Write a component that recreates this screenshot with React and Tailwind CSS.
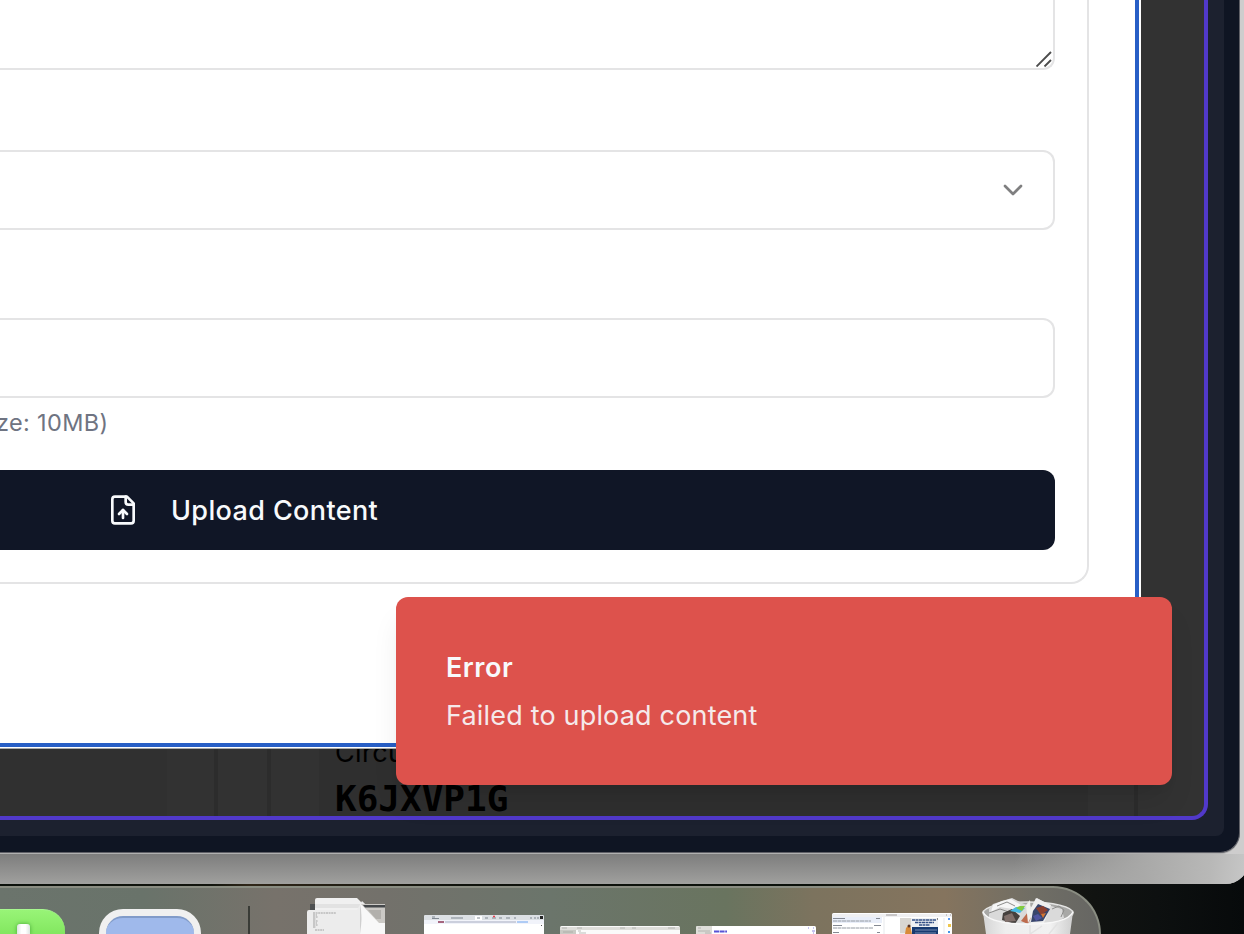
import React from "react";

function ChevronDown() {
  return (
    <svg className="mr-[24px] size-8" viewBox="0 0 24 24" fill="none" stroke="#7f7f80" strokeWidth="2" strokeLinecap="round" strokeLinejoin="round">
      <path d="m6 9 6 6 6-6" />
    </svg>
  );
}

function FileUp() {
  return (
    <svg className="size-8 shrink-0" viewBox="0 0 24 24" fill="none" stroke="#f8fafc" strokeWidth="2" strokeLinecap="round" strokeLinejoin="round">
      <path d="M15 2H6a2 2 0 0 0-2 2v16a2 2 0 0 0 2 2h12a2 2 0 0 0 2-2V7Z" />
      <path d="M14 2v4a2 2 0 0 0 2 2h4" />
      <path d="M12 12v6" />
      <path d="m15 15-3-3-3 3" />
    </svg>
  );
}

function ResizeGrip() {
  return (
    <svg className="size-4" viewBox="0 0 16 16" fill="none" stroke="#4c4c4c" strokeWidth="1.9">
      <path d="M0.500 15.500 15 1M8.500 15.500l6.500-6.500" />
    </svg>
  );
}

function UploadForm() {
  return (
    <div className="flex h-[584px] w-[1089px] flex-col rounded-br-[18px] border-r-2 border-b-2 border-[#e4e4e5]">
      <div className="flex h-[70px] w-[1055px] items-end justify-end rounded-br-[12px] border-r-2 border-b-2 border-[#e4e4e5] pr-[1px] pb-[1px]">
        <ResizeGrip />
      </div>
      <div className="mt-20 flex h-20 w-[1055px] items-center justify-end rounded-r-[12px] border-2 border-l-0 border-[#e4e4e5]">
        <ChevronDown />
      </div>
      <div className="mt-[88px] h-20 w-[1055px] rounded-r-[12px] border-2 border-l-0 border-[#e4e4e5]" />
      <p className="mt-[9px] -ml-[4px] text-[23.500px] leading-8 tracking-[0.35px] whitespace-nowrap text-[#6f7482]">ze: 10MB)</p>
      <div className="mt-[31px] flex h-20 w-[1055px] items-center gap-[33px] rounded-r-[12px] bg-[#101626] pl-[107px] text-[27px] font-medium tracking-[0.38px] text-[#f8fafc]">
        <FileUp />
        <span className="-ml-[1px] pt-[2px]">Upload Content</span>
      </div>
    </div>
  );
}

function PageBehind() {
  return (
    <div className="flex h-[67px] overflow-hidden text-black">
      <div className="h-full w-[167px] bg-[#303030]" />
      <div className="h-full w-[51px] border-r-4 border-[#2c2c2c]" />
      <div className="h-full w-[53px] border-r-4 border-[#2c2c2c]" />
      <div className="h-full w-[48px]" />
      <div className="h-full w-[769px] bg-[#2f2f2f] pl-4">
        <p className="-mt-[14px] text-[27px] leading-9 tracking-[0.4px]">Circuit</p>
        <p className="mt-[8px] font-['DejaVu_Sans_Mono',monospace] text-[36px] leading-10 font-bold">K6JXVP1G</p>
      </div>
      <div className="h-full w-[50px] border-r-4 border-[#2c2c2c]" />
    </div>
  );
}

function Toast() {
  return (
    <div className="absolute top-[597px] left-[396px] flex h-[188px] w-[776px] flex-col justify-center gap-2 rounded-[12px] bg-[#dd524c] pt-[1px] pl-[50px] text-[27px] leading-10 text-[#f8fafc] shadow-[0_20px_30px_-6px_rgba(0,0,0,0.1),0_8px_12px_-8px_rgba(0,0,0,0.1)]">
      <p className="font-semibold tracking-[0.5px]">Error</p>
      <p className="tracking-[0.18px] opacity-90">Failed to upload content</p>
    </div>
  );
}

function Documents() {
  return (
    <svg className="ml-[57px] h-[38px] w-[78px] shrink-0" viewBox="0 0 78 38">
      <path d="M54 8h22q2 0 2 2v28H54z" fill="#cbc9c5" />
      <path d="M54 9h24v3H54z" fill="#45484b" />
      <path d="M58 15h15v8H62zM67 24h9v2h-7z" fill="#aaa8a4" />
      <path d="M3 8h7v8H3z" fill="#4e5051" />
      <path d="M8 4q0-2 2-2h40l6 6v30H8z" fill="#f0f0f0" />
      <path d="M8 8h45v4H8z" fill="#e2e2e2" />
      <path d="M0 16q0-2 2-2h48l5-9 23 22v11H0z" fill="#ececec" />
      <path d="M53 8v30h25V27z" fill="#f8f8f8" />
      <path d="M54 8h24v19H72z" fill="#cbc9c5" />
      <path d="M56 9h22v2.500H58z" fill="#45484b" />
      <path d="M61 14h13v9h-5z" fill="#b2b0ac" />
      <path d="M53 8v30Q56 20 53 8z" fill="#cfcfcf" />
      <path d="M6 17h23M6 19h4M6 21h5M6 23h3M6 25h5M6 27h4M6 29h5M6 31h3M8 34h9" stroke="#858585" strokeWidth=".7" strokeDasharray="2 .6" />
    </svg>
  );
}

function BrowserThumb() {
  return (
    <svg className="ml-[39px] h-[19px] w-[120px] shrink-0" viewBox="0 0 120 19">
      <rect width="120" height="24" rx="1.5" fill="#fff" />
      <path d="M0 1.500Q0 0 1.500 0h117Q120 0 120 1.500V5H0z" fill="#dce0e4" />
      <path d="M51 1h7v4h-7z" fill="#fff" />
      <path d="M8 2h3M8 3.500h7M27 3h12M53 3h3M61 3h3M68 3h4M75 3h3M82 3h4M90 3h2M106 3h2M110 3h2M113 3h2" stroke="#7f8790" />
      <path d="M69 1.500h2" stroke="#ed3e4c" strokeWidth="1.500" />
      <path d="M116 1h3v3h-3z" fill="#242424" />
      <path d="M0 5h120v4H0z" fill="#f1f3fa" />
      <path d="M14 7h6" stroke="#8b3655" strokeWidth="1.500" />
      <path d="M21 7h71" stroke="#848da7" strokeWidth=".7" />
      <path d="M93 7h11" stroke="#4c91ed" strokeWidth=".8" />
      <path d="M117 10h1v1h-1z" fill="#555" />
    </svg>
  );
}

function FinderThumb() {
  return (
    <svg className="ml-4 h-[8px] w-[120px] shrink-0" viewBox="0 0 120 8">
      <rect width="120" height="12" rx="1.500" fill="#fafafa" />
      <path d="M0 1h120v3H0z" fill="#dededa" />
      <path d="M0 4h16v4H0z" fill="#c9cac4" />
      <path d="M2 2h5M17 2h5M60 2h5M72 2h4M108 2h7M3 6h10M18 5h3M19 7h7" stroke="#a2a39e" strokeWidth=".7" />
    </svg>
  );
}

function SettingsThumb() {
  return (
    <svg className="ml-4 h-[8px] w-[120px] shrink-0" viewBox="0 0 120 8">
      <rect width="120" height="12" rx="1.500" fill="#fff" />
      <path d="M1 0h15v8H0V1z" fill="#deded9" />
      <path d="M2 2h3M2 5h12M9 7h6" stroke="#a8a8a4" strokeWidth=".8" />
      <path d="M18 5.500h13" stroke="#5853d5" strokeWidth="1.800" strokeDasharray="5 .6" />
      <path d="M116 5h3M117 7h1M112 2h1M117 2h1" stroke="#8b86df" />
    </svg>
  );
}

function MailThumb() {
  return (
    <svg className="ml-4 h-[21px] w-[120px] shrink-0" viewBox="0 0 120 21">
      <rect width="120" height="25" rx="1.500" fill="#fff" />
      <path d="M0 1h120v3H0z" fill="#f0f0f2" />
      <path d="M54 2h11M114 2h1M118 2h1" stroke="#8b8585" strokeWidth=".8" />
      <path d="M0 4h50v6H0z" fill="#e9eef9" />
      <path d="M1 5.500h12M44 5.500h4M1 12.500h9M42 12.500h7M1 19.500h6M45 19.500h3" stroke="#858a93" />
      <path d="M1 8h38M1 15h40" stroke="#79808b" strokeWidth=".8" strokeDasharray="4 .5" />
      <path d="M52 4v17M112 5v16" stroke="#e7e9ec" />
      <path d="M68 5h38v16H68z" fill="#eef0f2" />
      <path d="M68 5h11v15H68z" fill="#d8d6d2" />
      <path d="M80 7h24M83 9.500h19M87 12h11" stroke="#345087" strokeWidth="1.500" strokeDasharray="3 .5" />
      <path d="M80 14h26v7H80z" fill="#173a70" />
      <path d="M83 17h22M83 20h21" stroke="#8da0c0" strokeWidth=".8" />
      <path d="M76 13h2l1 3 1 5h-7l1-6z" fill="#d88b3a" />
      <circle cx="77" cy="13" r="1.500" fill="#583326" />
      <path d="M105 6h1" stroke="#222" />
      <path d="M116 5h2v2h-2z" fill="#5d9af1" />
      <path d="M116 11h3v3h-3z" fill="#efc64c" />
      <path d="M116 18h2v2h-2z" fill="#3f94e9" />
    </svg>
  );
}

function Trash() {
  return (
    <svg className="ml-[30px] h-[38px] w-[92px] shrink-0" viewBox="0 0 92 38">
      <defs>
        <linearGradient id="bin" x1="0" x2="1">
          <stop stopColor="#d5d5d5" />
          <stop offset=".25" stopColor="#eeeeee" />
          <stop offset=".75" stopColor="#f1f1f1" />
          <stop offset="1" stopColor="#cfcfcf" />
        </linearGradient>
      </defs>
      <ellipse cx="46" cy="17" rx="45" ry="11" fill="#a8a8a6" stroke="#e5e5e4" strokeWidth="1.500" />
      <path d="m7 13 4-5 9-3 10-3 10 5 10 4 5-9 14 8 11 3 2 9-15 8H20L7 22z" fill="#dadada" />
      <path d="m11 9 9-4 9-2 10 6-8 4-13-2-9 5z" fill="#f6f6f6" />
      <path d="m15 10 10-4 8 4M7 17l11-4 9 3M70 13l7-3 5 4-3 7" fill="none" stroke="#8c8c8b" />
      <path d="m21 17 9-4 8 7-5 8-13-4z" fill="#45413e" />
      <path d="m22 20 8-3 4 8-11 1z" fill="#80706b" />
      <path d="m28 15 6-4 9 1-5 5z" fill="#48bae5" />
      <path d="m34 12 4-2h5l-3 5z" fill="#82cb40" />
      <path d="m39 25 7-9 3 6-3 6z" fill="#bd6b4d" />
      <path d="m44 9 4-5 1 17-3 6z" fill="#f0f0ed" />
      <path d="m48 14 6-12 15 7-7 18-13 1z" fill="#efefef" />
      <path d="m51 15 5-7 12 5-7 12-12 1z" fill="#38456b" />
      <path d="m54 12 7-2 5 4-7 5z" fill="#8d402f" />
      <path d="m51 20 5-2 4 4-6 3z" fill="#4f54a0" />
      <path d="m59 18 5-1-3 5z" fill="#d4732f" />
      <path d="M1 16q6 12 45 12t45-12l-3 22H4z" fill="url(#bin)" />
      <path d="M1 16q6 12 45 12t45-12" fill="none" stroke="#f8f8f8" strokeWidth="1.500" />
      <path d="M48 29v9M60 30l-12 8M76 27l-9 11" stroke="#e2e2e2" strokeWidth="1.500" />
    </svg>
  );
}

function Dock() {
  return (
    <div className="mt-[2px] flex h-[48px] w-[1101px] items-end overflow-hidden rounded-tr-[48px] border-t-2 border-r-2 border-[#8a8d82] bg-[linear-gradient(90deg,#6b746c_0%,#69736a_13%,#77726b_25%,#73716b_35%,#6b756b_50%,#69745f_66%,#7c735e_74%,#85745e_86%,#706e65_94%,#666663_100%)]">
      <div className="flex h-[25px] w-[65px] shrink-0 justify-end rounded-tr-[22px] border-t border-[#a7f88f] bg-[linear-gradient(#98f477,#83e760)] pr-[35px]">
        <div className="mt-[14px] h-[11px] w-[13px] rounded-t-[3px] bg-[linear-gradient(90deg,#dce5e1,#ffffff_35%,#ffffff_65%,#dce5e1)] shadow-[0_0_4px_#46a638]" />
      </div>
      <div className="ml-[34px] h-[25px] w-[102px] shrink-0 rounded-t-[24px] bg-[#f0f0f0] px-[7px] pt-[7px]">
        <div className="h-full rounded-t-[17px] border-t-2 border-[#819bc9] bg-[#9fb9eb]" />
      </div>
      <div className="ml-[47px] h-[28px] w-[2px] shrink-0 bg-[#393b36]" />
      <Documents />
      <BrowserThumb />
      <FinderThumb />
      <SettingsThumb />
      <MailThumb />
      <Trash />
    </div>
  );
}

export default function App() {
  return (
    <div className="relative h-[934px] w-[1244px] overflow-hidden bg-[linear-gradient(90deg,#0c110b_0%,#12150e_17%,#302719_20%,#10130d_37%,#0b110b_65%,#252015_75%,#111311_88%,#0d1010_93%,#070a0b_100%)] font-['Inter',sans-serif] [font-optical-sizing:none]">
      <div className="h-[884px] w-[1248px] overflow-hidden rounded-br-[22px] bg-[#cecdcd]">
        <div className="h-[884px] bg-[linear-gradient(180deg,transparent_854px,#7d7d7d_854px,#a0a09e_884px)]">
          <div className="flex h-[853px] w-[1240px] flex-col rounded-br-[20px] border-r border-b border-[#5f6067] bg-[#0f1523] shadow-[0_1px_0_#b0b0b0]">
            <div className="h-[836px] w-[1224px] rounded-br-[8px] bg-[#1c212f]">
              <div className="h-[820px] w-[1208px] overflow-hidden rounded-br-[16px] border-r-4 border-b-4 border-[#5139ca] bg-[#323232]">
                <div className="h-[749px] w-[1141px] border-b border-[#aaa] bg-white pr-[2px] pb-[1px]">
                  <div className="h-full border-r-4 border-b-4 border-[#285fc6]">
                    <UploadForm />
                  </div>
                </div>
                <PageBehind />
              </div>
            </div>
          </div>
          <div className="mt-[1px] ml-auto h-[30px] w-[260px] bg-[linear-gradient(97deg,transparent_10%,#a9a9a8_60%,#b8b8b7_85%,#c8c8c8_100%)]" />
        </div>
      </div>
      <Dock />
      <Toast />
    </div>
  );
}
